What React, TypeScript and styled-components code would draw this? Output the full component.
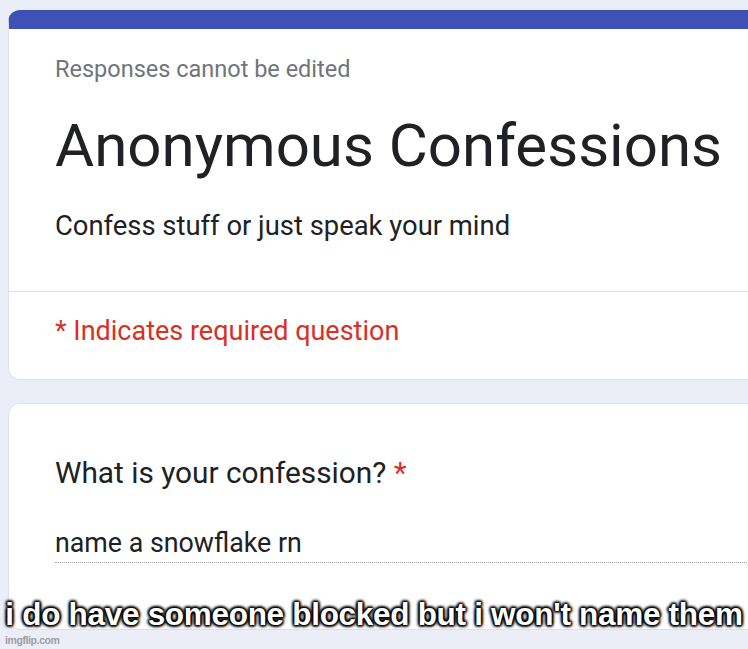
import styled, { createGlobalStyle } from "styled-components";

const GlobalStyle = createGlobalStyle`
  html, body {
    margin: 0;
    padding: 0;
    background: #eceef7;
    overflow: hidden;
  }
  body {
    font-family: Roboto, "Noto Sans", Arial, sans-serif;
    color: #202124;
  }
`;

const Page = styled.div`
  position: relative;
  width: 748px;
  height: 649px;
  overflow: hidden;
  padding: 10px 0 0 8px;
  box-sizing: border-box;
  display: flex;
  flex-direction: column;
  gap: 23px;
`;

const Card = styled.section<{ $accent?: boolean }>`
  width: 820px;
  background: #ffffff;
  border: 1px solid #dfe1ea;
  border-radius: 12px;
  overflow: hidden;
  flex-shrink: 0;
  box-sizing: border-box;
  ${(p) => (p.$accent ? "border-top: 19px solid #3f51b5;" : "")}
`;

const Header = styled.div`
  padding: 26px 46px 49px;
  border-bottom: 1px solid #e0e0e0;
`;

const Note = styled.div`
  font-size: 23.5px;
  line-height: 28px;
  color: #70757a;
`;

const Title = styled.h1`
  margin: 27px 0 0;
  font-size: 60px;
  font-weight: 400;
  line-height: 72px;
`;

const Description = styled.p`
  margin: 28px 0 0;
  font-size: 27.4px;
  line-height: 32px;
`;

const Required = styled.div`
  padding: 23px 46px 32px;
  font-size: 27px;
  line-height: 32px;
  color: #d93025;
`;

const Question = styled.div`
  padding: 51px 46px 0;
`;

const Label = styled.div`
  font-size: 29.8px;
  line-height: 36px;
`;

const Star = styled.span`
  color: #d93025;
`;

const AnswerWrap = styled.div`
  margin-top: 36px;
  font-size: 26.8px;
  line-height: 32px;
`;

const AnswerText = styled.div`
  padding-bottom: 3px;
  border-bottom: 1px dotted #9aa0a6;
`;

const Spacer = styled.div`
  height: 66px;
`;

const Caption = styled.div`
  position: absolute;
  left: 0;
  right: 0;
  top: 594px;
  text-align: center;
  font-family: "Liberation Sans", Arial, sans-serif;
  font-weight: 700;
  font-size: 31.5px;
  line-height: 40px;
  letter-spacing: -0.3px;
  color: #ffffff;
  text-shadow:
    0 0 2px #000,
    0 0 3px #000,
    0 0 4px #000,
    1px 1px 3px #000,
    -1px -1px 3px #000,
    1px -1px 3px #000,
    -1px 1px 3px #000;
  white-space: nowrap;
`;

const Watermark = styled.div`
  position: absolute;
  left: 5px;
  top: 634px;
  font-family: "Liberation Sans", Arial, sans-serif;
  font-weight: 700;
  font-size: 10.5px;
  line-height: 12px;
  letter-spacing: -0.4px;
  color: #9c9ca4;
`;

export default function App() {
  return (
    <>
      <GlobalStyle />
      <Page>
        <Card $accent>
          <Header>
            <Note>Responses cannot be edited</Note>
            <Title>Anonymous Confessions</Title>
            <Description>Confess stuff or just speak your mind</Description>
          </Header>
          <Required>* Indicates required question</Required>
        </Card>
        <Card>
          <Question>
            <Label>
              What is your confession? <Star>*</Star>
            </Label>
            <AnswerWrap>
              <AnswerText>name a snowflake rn</AnswerText>
              <Spacer />
            </AnswerWrap>
          </Question>
        </Card>
        <Caption>i do have someone blocked but i won't name them</Caption>
        <Watermark>imgflip.com</Watermark>
      </Page>
    </>
  );
}
